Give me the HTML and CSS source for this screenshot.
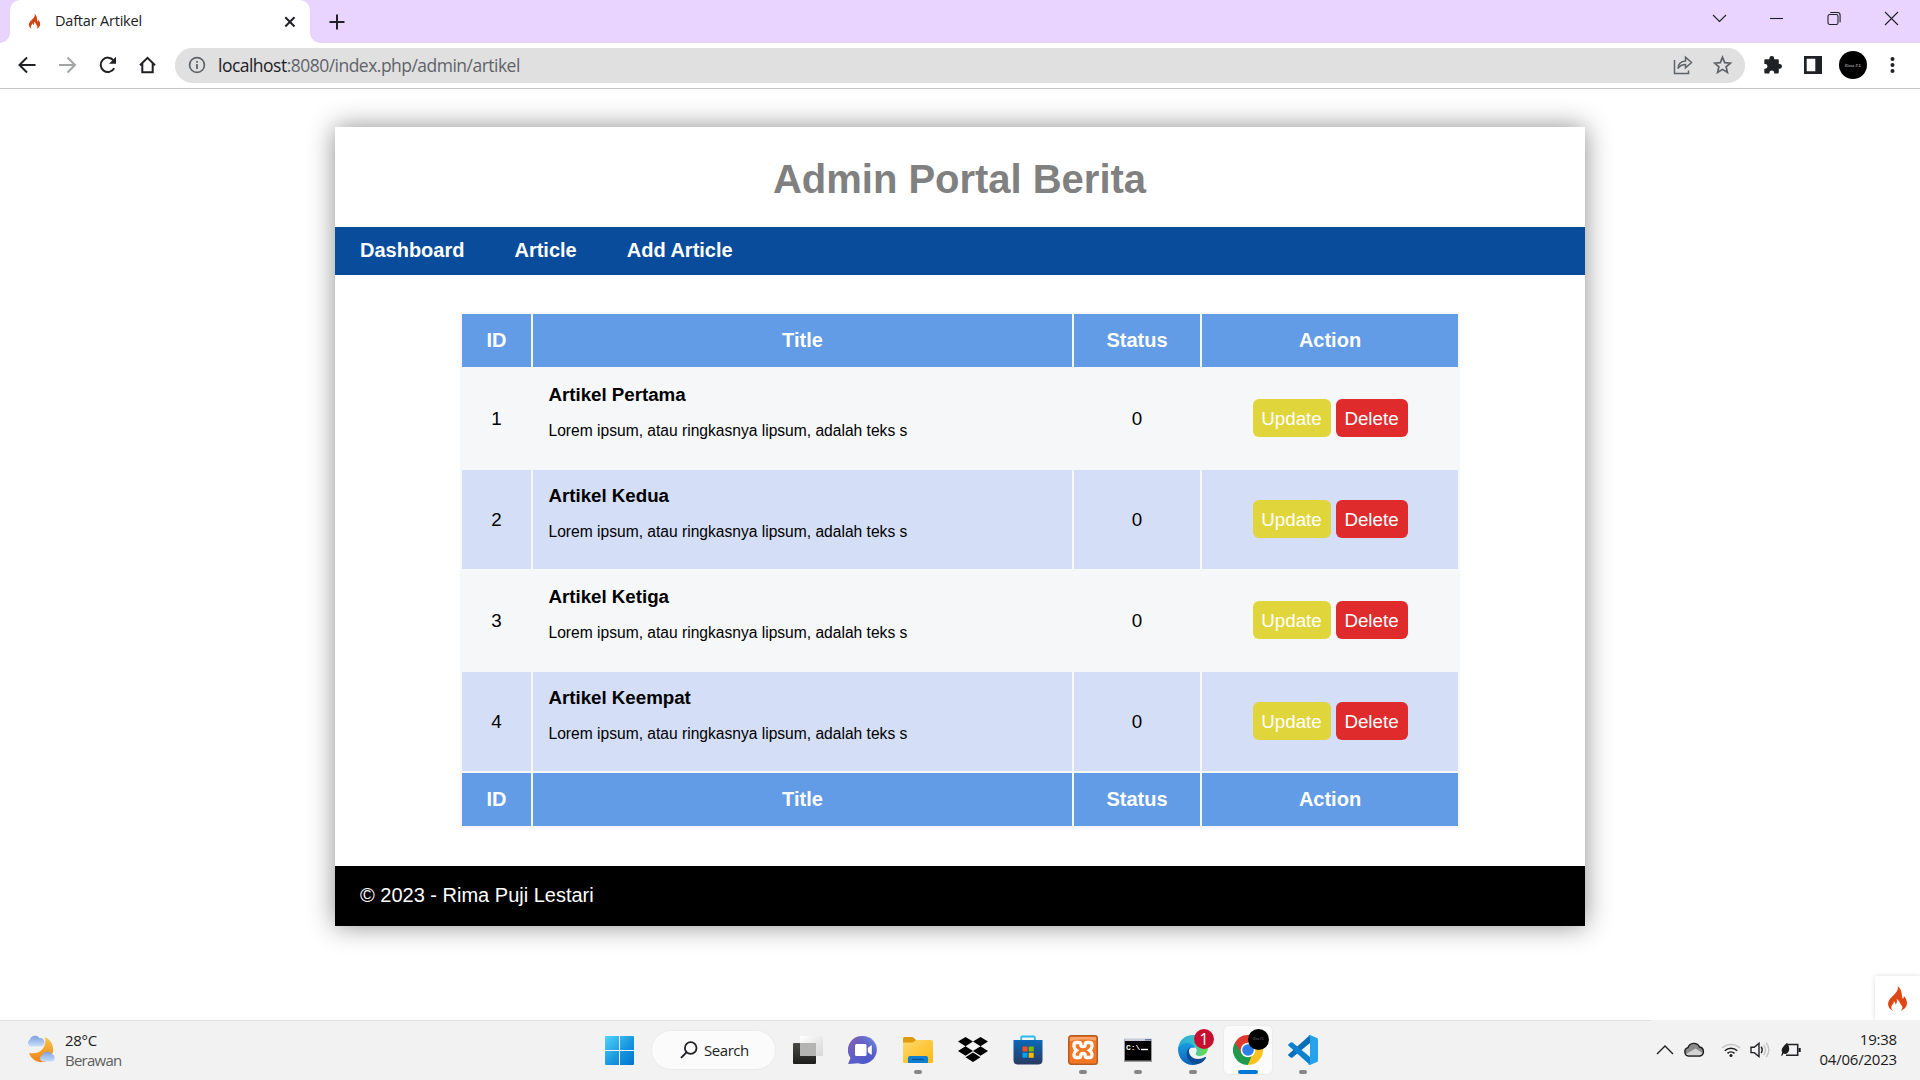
FILE: index.html
```html
<!DOCTYPE html>
<html lang="id">
<head>
<meta charset="utf-8">
<title>Daftar Artikel</title>
<link rel="stylesheet" href="styles.css">
</head>
<body>
<svg width="0" height="0" class="defs">
  <symbol id="flame" viewBox="0 0 19 25"><path d="M9.600 0c1 3.200-.6 5.400-2.800 8C4 11 .2 13.600.1 18c0 3.200 2.300 6 5 6.700-1.800-1.400-2.300-3.500-1.100-5.500.9-1.400 2-1.800 1.800-3.900 1.500.7 1.800 2.100 1.600 3.300 1.500-1.100 2-3.300 1.200-5.600 3.200 1.600 3 4.500 4.900 6.200 1.600 1.900 1 4-.8 5.500C16.500 23.600 19 20.500 19 17c0-3-1.500-5.200-3.300-7.300.3 1.500 0 2.600-1 3.100C13.400 9 14.400 3.500 9.600 0z"/></symbol>
</svg>

<header class="tabstrip">
  <div class="tab">
    <svg class="tab-icon" width="13" height="15"><use href="#flame"/></svg>
    <span class="tab-title">Daftar Artikel</span>
    <svg width="12" height="12" viewBox="0 0 12 12" class="line w2"><path d="M1.300 1.300l9.200 9.200M10.500 1.300L1.300 10.500"/></svg>
  </div>
  <svg class="new-tab line w2" width="16" height="16" viewBox="0 0 16 16"><path d="M8 .5v15M.5 8h15"/></svg>
  <div class="window-controls">
    <svg width="15" height="15" viewBox="0 0 15 15" class="line"><path d="M1 4l6.500 6.500L14 4"/></svg>
    <svg width="15" height="15" viewBox="0 0 15 15" class="line"><path d="M1 7.500h13"/></svg>
    <svg width="15" height="15" viewBox="0 0 15 15" class="line"><rect x="1" y="3.500" width="10" height="10" rx="1.800"/><path d="M3.300 1.500h7.200a2.600 2.600 0 0 1 2.600 2.600v7.200"/></svg>
    <svg width="15" height="15" viewBox="0 0 15 15" class="line"><path d="M1 1l13 13M14 1L1 14"/></svg>
  </div>
</header>

<div class="toolbar">
  <div class="nav-buttons">
    <svg width="20" height="20" viewBox="0 0 20 20" class="line w2"><path d="M18.500 10H3M10 2.500L2.500 10l7.500 7.500"/></svg>
    <svg width="20" height="20" viewBox="0 0 20 20" class="line w2 muted"><path d="M2 10H17.500M10.500 2.500l7.500 7.500-7.500 7.500"/></svg>
    <svg width="20" height="20" viewBox="0 0 20 20" class="line w2"><path d="M17.200 13.300A7.200 7.200 0 1 1 16.500 5.300"/><path d="M19 1.800v7h-7z" fill="#202124" stroke="none"/></svg>
    <svg width="20" height="20" viewBox="0 0 20 20" class="line w2"><path d="M3 10.300L10.500 2.800l7.500 7.500M5.300 8.500v8.700h10.400V8.500"/></svg>
  </div>
  <div class="omnibox">
    <svg width="18" height="18" viewBox="0 0 18 18" class="line grey"><circle cx="9" cy="9" r="7.400" stroke-width="1.700"/><path d="M9 8v5M9 5v1.700" stroke-width="1.800"/></svg>
    <span class="url"><b>localhost</b>:8080/index.php/admin/artikel</span>
    <svg width="20" height="20" viewBox="0 0 20 20" class="line grey"><path d="M1.500 5v13.500h14v-3" stroke-width="1.500"/><path d="M5 13.500c.3-4.500 3.200-7.300 7.500-7.500V2.200l6 5.300-6 5.300V9.500c-3.500 0-5.600 1-7.500 4z" stroke-width="1.500"/></svg>
    <svg width="20" height="20" viewBox="0 0 20 20" class="line grey"><path d="M9.500 2.300l2.200 5.300 5.700.5-4.300 3.700 1.300 5.600-4.900-3-4.900 3 1.300-5.600-4.300-3.700 5.700-.5z" stroke-width="1.700"/></svg>
  </div>
  <svg class="puzzle" width="20" height="20" viewBox="0 0 20 20"><path d="M1.300 5.500q0-1.300 1.300-1.300H6.400v-.9a2.400 2.400 0 0 1 4.800 0v.9h3.300q1.300 0 1.300 1.300V9h.8a2.400 2.400 0 0 1 0 4.800h-.8v3.500q0 1.300-1.300 1.300H11.200v-.8a2.400 2.400 0 0 0-4.800 0v.8H2.600q-1.300 0-1.300-1.300v-3.600h.8a2.400 2.400 0 0 0 0-4.800h-.8z" fill="#202124"/></svg>
  <svg class="panel" width="18" height="18" viewBox="0 0 18 18"><path d="M0 0h18v18H0zM2.700 2.700v12.600h8.600V2.700z" fill="#202124" fill-rule="evenodd"/></svg>
  <div class="avatar">Rima P.L</div>
  <svg class="dots" width="5" height="18" viewBox="0 0 5 18"><circle cx="2.500" cy="3" r="2"/><circle cx="2.500" cy="9" r="2"/><circle cx="2.500" cy="15" r="2"/></svg>
</div>

<main class="viewport">
  <div class="container">
    <h1 class="page-title">Admin Portal Berita</h1>
    <nav class="menu"><a>Dashboard</a><a>Article</a><a>Add Article</a></nav>
    <section class="content">
      <table class="articles">
        <colgroup><col class="c-id"><col class="c-title"><col class="c-status"><col class="c-action"></colgroup>
        <thead><tr><th>ID</th><th>Title</th><th>Status</th><th>Action</th></tr></thead>
        <tbody>
          <tr><td>1</td><td class="summary"><h3>Artikel Pertama</h3><p>Lorem ipsum, atau ringkasnya lipsum, adalah teks s</p></td><td>0</td><td><div class="actions"><a class="btn update">Update</a><a class="btn delete">Delete</a></div></td></tr>
          <tr><td>2</td><td class="summary"><h3>Artikel Kedua</h3><p>Lorem ipsum, atau ringkasnya lipsum, adalah teks s</p></td><td>0</td><td><div class="actions"><a class="btn update">Update</a><a class="btn delete">Delete</a></div></td></tr>
          <tr><td>3</td><td class="summary"><h3>Artikel Ketiga</h3><p>Lorem ipsum, atau ringkasnya lipsum, adalah teks s</p></td><td>0</td><td><div class="actions"><a class="btn update">Update</a><a class="btn delete">Delete</a></div></td></tr>
          <tr><td>4</td><td class="summary"><h3>Artikel Keempat</h3><p>Lorem ipsum, atau ringkasnya lipsum, adalah teks s</p></td><td>0</td><td><div class="actions"><a class="btn update">Update</a><a class="btn delete">Delete</a></div></td></tr>
        </tbody>
        <tfoot><tr><th>ID</th><th>Title</th><th>Status</th><th>Action</th></tr></tfoot>
      </table>
    </section>
    <footer class="site-footer">© 2023 - Rima Puji Lestari</footer>
  </div>
  <div class="debug-toggle"><svg width="19" height="25"><use href="#flame"/></svg></div>
</main>

<footer class="taskbar">
  <div class="weather">
    <svg width="32" height="30" viewBox="0 0 32 30">
      <defs>
        <linearGradient id="moon" x1="0" y1="0" x2="0" y2="1"><stop offset="0" stop-color="#f6c74a"/><stop offset="1" stop-color="#f08118"/></linearGradient>
        <linearGradient id="cloud" x1="0" y1="0" x2="0" y2="1"><stop offset="0" stop-color="#7d9fe0"/><stop offset="1" stop-color="#c8defb"/></linearGradient>
      </defs>
      <path d="M20 3c12 6 10 22-1 25-7 1-13-3-15-9 12 2 18-6 16-16z" fill="url(#moon)"/>
      <path d="M5 12.500a4 4 0 0 1 0-7A5.300 5.300 0 0 1 14.500 4a4.400 4.400 0 0 1 2 8.500z" fill="url(#cloud)"/>
      <path d="M17 27.500a3.500 3.500 0 0 1 .5-6.500 5 5 0 0 1 9-1 4 4 0 0 1 1 7.500z" fill="url(#cloud)"/>
    </svg>
    <div class="weather-text"><span>28°C</span><span class="sub">Berawan</span></div>
  </div>

  <div class="apps">
    <div class="app start"><svg width="29" height="29" viewBox="0 0 29 29">
      <defs><linearGradient id="win" x1="0" y1="0" x2="1" y2="1"><stop offset="0" stop-color="#50d3fc"/><stop offset=".55" stop-color="#1897df"/><stop offset="1" stop-color="#0173cf"/></linearGradient></defs>
      <path d="M1 0h13v14H0V1q0-1 1-1zM15 0h13q1 0 1 1v13H15zM0 15h14v14H1q-1 0-1-1zM15 15h14v13q0 1-1 1H15z" fill="url(#win)"/></svg></div>
    <div class="search">
      <svg width="18" height="18" viewBox="0 0 18 18" class="line"><circle cx="10.700" cy="7" r="5.800" stroke-width="1.800"/><path d="M6.500 11.300L1 16.800" stroke-width="1.900"/></svg>
      <span>Search</span>
    </div>
    <div class="app"><svg width="30" height="30" viewBox="0 0 30 30">
      <defs><linearGradient id="tv" x1="0" y1="0" x2="0" y2="1"><stop offset="0" stop-color="#4a4a46"/><stop offset="1" stop-color="#1d1d1b"/></linearGradient><linearGradient id="tv2" x1="0" y1="0" x2="1" y2="1"><stop offset="0" stop-color="#fff"/><stop offset="1" stop-color="#d6d6d6"/></linearGradient></defs>
      <rect x="0" y="8" width="23" height="21" rx="1" fill="url(#tv)"/><rect x="7" y="1" width="23" height="20" rx="1" fill="url(#tv2)"/><path d="M7 8h16v13H7z" fill="#b4b4b2"/></svg></div>
    <div class="app"><svg width="30" height="30" viewBox="0 0 30 30">
      <defs><linearGradient id="chat" x1="0" y1="0" x2="1" y2="1"><stop offset="0" stop-color="#8a5fae"/><stop offset=".5" stop-color="#5b5fc7"/><stop offset=".8" stop-color="#5059c9"/></linearGradient><linearGradient id="chat2" x1="0" y1="1" x2="1" y2="0"><stop offset=".5" stop-color="#5b5fc7" stop-opacity="0"/><stop offset="1" stop-color="#7ba5f5"/></linearGradient></defs>
      <path d="M15 1a14 14 0 1 1-5 27.200L1 29c-.8 0-.8-.7-.5-1.300l2-4.700A14 14 0 0 1 15 1z" fill="url(#chat)"/><circle cx="15" cy="15" r="14" fill="url(#chat2)"/>
      <rect x="7" y="9" width="11.500" height="12" rx="1.500" fill="#fff"/><path d="M19.800 13l3-2.500q1-.5 1 .7v7.600q0 1.200-1 .7l-3-2.500z" fill="#fff"/></svg></div>
    <div class="app open"><svg width="30" height="30" viewBox="0 0 30 30">
      <defs><linearGradient id="fold" x1="0" y1="0" x2="1" y2="1"><stop offset="0" stop-color="#ffd96b"/><stop offset="1" stop-color="#fdb813"/></linearGradient></defs>
      <path d="M0 3.500Q0 2 1.500 2H9q1.500 0 2.500 1.500L13 5v5H0z" fill="#dd9d0b"/><path d="M0 7.500h9q1.500 0 2.500-1.200L13 5h15.500q1.500 0 1.500 1.500v20q0 1.500-1.500 1.500h-27Q0 28 0 26.500z" fill="url(#fold)"/>
      <path d="M5 28v-5q0-2 2-2h16q2 0 2 2v5z" fill="#0f7fd1"/><path d="M9 24.500h12" stroke="#0a4f8f" stroke-width="1.200"/></svg></div>
    <div class="app"><svg width="30" height="30" viewBox="0 0 30 30"><path d="M7.500 2L15 6.600l-7.500 4.700L0 6.600zM22.500 2L30 6.600l-7.500 4.700L15 6.600zM0 16l7.500-4.700L15 16l-7.500 4.700zM22.500 11.300L30 16l-7.500 4.700L15 16zM7.500 22.200L15 17.600l7.500 4.600L15 27z" fill="#000"/></svg></div>
    <div class="app"><svg width="30" height="30" viewBox="0 0 30 30">
      <defs><linearGradient id="store" x1="0" y1="0" x2="0" y2="1"><stop offset="0" stop-color="#0a68ba"/><stop offset="1" stop-color="#2a3a62"/></linearGradient></defs>
      <path d="M8.200 7V2.500q0-1 1-1h11.600q1 0 1 1V7" fill="none" stroke="#29b9f0" stroke-width="1.800"/><path d="M.5 5h29v20q0 4.500-4.500 4.500H5Q.5 29.500.5 25z" fill="url(#store)"/>
      <path d="M9.500 11.500h5v5h-5z" fill="#f25022"/><path d="M15.700 11.500h5v5h-5z" fill="#7fba00"/><path d="M9.500 17.700h5v5h-5z" fill="#00a4ef"/><path d="M15.700 17.700h5v5h-5z" fill="#ffb900"/></svg></div>
    <div class="app open"><svg width="30" height="30" viewBox="0 0 30 30">
      <rect x=".7" y=".7" width="28.600" height="28.600" rx="2.500" fill="#f37623" stroke="#b55a20" stroke-width="1.400"/><path d="M2 2h26v3.500Q15 3.500 2 6z" fill="#f8a46c"/>
      <path d="M8.500 7.500H11q1.800 0 1.800 2 0 2.200 2.200 2.200t2.200-2.200q0-2 1.800-2h2.500q2.500 0 2.500 2.500v1.500q0 2-2.500 3.800 2.500 1.700 2.500 3.700v1q0 2.500-2.500 2.500H19q-1.800 0-1.800-2 0-2.200-2.200-2.200t-2.200 2.200q0 2-1.800 2H8.500Q6 22.500 6 20v-1q0-2 2.500-3.700Q6 13.500 6 11.500V10q0-2.500 2.500-2.500z" fill="none" stroke="#fff" stroke-width="3.300"/></svg></div>
    <div class="app open"><svg width="30" height="30" viewBox="0 0 30 30"><rect x="1" y="4" width="28" height="23" fill="#9b9b9b"/><path d="M1.500 3.500h27v2.500h-27z" fill="#c9ccd8"/><path d="M2 6h26v19.500H2z" fill="#000"/><path d="M22 4h6v1.500h-6z" fill="#6b79a8"/><text x="3" y="15" class="prompt">C:\</text><path d="M18 14.500h7" stroke="#fff" stroke-width="1.400"/></svg></div>
    <div class="app open"><svg width="30" height="30" viewBox="0 0 30 30">
      <defs><linearGradient id="edge1" x1="0" y1="0" x2="1" y2=".2"><stop offset="0" stop-color="#2aa5dc"/><stop offset=".6" stop-color="#36c3c8"/><stop offset="1" stop-color="#63d957"/></linearGradient><linearGradient id="edge2" x1="0" y1="0" x2="0" y2="1"><stop offset="0" stop-color="#1b9de2"/><stop offset="1" stop-color="#0c62b8"/></linearGradient></defs>
      <path d="M0 14C1 5 7 0 15 0c9 0 15 6 15 13 0 5-4 8-8 8-3 0-5-1-4-3 2-3 0-7-5-7C7 10 2 11 0 14z" fill="url(#edge1)"/>
      <path d="M0 14c1-4 5-6 9-6s7 2 8 5c-4-1-7 1-7 5 0 6 5 11 11 10-2 1.500-4 2-6 2C6 30 0 23 0 14z" fill="url(#edge2)"/>
      <path d="M12 12c-3 6 1 12 8 12 3 0 5-1 7-2 1 0 1.300.5 1 1-3 5-8 7-11 6-7-1-12-11-5-17z" fill="#0d4d94"/></svg><span class="badge">1</span></div>
    <div class="app open active"><svg width="30" height="30" viewBox="0 0 30 30">
      <path d="M15 15L2 7.500A15 15 0 0 0 15 30l6.500-11z" fill="#1f9a4c"/><path d="M15 15h6L15 30A15 15 0 0 0 28 7.500H15z" fill="#fcc31e"/><path d="M15 7.500h13A15 15 0 0 0 2 7.500l6.500 11.200z" fill="#e03a2e"/>
      <circle cx="15" cy="15" r="7.300" fill="#fff"/><circle cx="15" cy="15" r="5.800" fill="#2f7de9"/></svg><span class="profile">Rima P.L</span></div>
    <div class="app open"><svg width="30" height="30" viewBox="0 0 30 30"><path d="M22 0v8L4.500 22.500q-1 .6-1.800 0L.5 20.700q-.8-.8 0-1.500z" fill="#0a6fb8"/><path d="M22 30v-8L4.500 7.500q-1-.6-1.800 0L.5 9.300q-.8.800 0 1.500z" fill="#0b82cf"/><path d="M22 0l7 3q1 .5 1 1.700v20.600q0 1.200-1 1.700l-7 3q-1.500 0-2-1 2 .5 2-1.500v-25q0-2-2-1.500 1-1 2-1z" fill="#27a3ee"/></svg></div>
  </div>

  <div class="tray">
    <svg class="expand line" width="18" height="18" viewBox="0 0 18 18"><path d="M1 13l8-8 8 8" stroke-width="1.400"/></svg>
    <svg class="cloud" width="22" height="18" viewBox="0 0 22 18"><path d="M5.500 15a4.300 4.300 0 0 1-.5-8.400 6.200 6.200 0 0 1 11.500-.6 4.600 4.600 0 0 1 .5 9z" fill="#8b8b8b" stroke="#1b1b1b" stroke-width="1.400"/><path d="M3 13L12.500 7.500l7 4.500q-.5 2-3 2.300H5.500Q4 14.300 3 13z" fill="#d2d2d2"/></svg>
    <svg class="wifi" width="20" height="18" viewBox="0 0 20 18"><path d="M1 7a13 13 0 0 1 18 0" stroke="#c4c4c4"/><path d="M3.800 9.700a9 9 0 0 1 12.400 0M6.500 12.400a5 5 0 0 1 7 0"/><circle cx="10" cy="14.500" r="1.500" class="solid"/></svg>
    <svg width="20" height="18" viewBox="0 0 20 18" class="line"><path d="M1 6.200h3.200L9 2.300v13.200l-4.800-3.900H1z" stroke-width="1.400"/><path d="M11.200 5.700q2 3.200 0 6.400" stroke-width="1.400"/><path d="M13.700 3.700q3.500 5.200 0 10.400M16.300 1.700q5 7.200 0 14.400" stroke="#c4c4c4" stroke-width="1.400"/></svg>
    <svg width="21" height="18" viewBox="0 0 21 18" class="line"><path d="M7.500 3.500h10.200v10.700H6" stroke-width="1.500"/><path d="M18.500 7h2.200v4h-2.200z" class="solid"/><path d="M7 1.700C9.500 5.500 10.300 9 7.500 12q-2 1.500-4 .5L2 15l-.8-.5 1-3C.3 7.500 4 5 7 1.700z" class="solid"/></svg>
    <div class="clock"><span>19:38</span><span>04/06/2023</span></div>
  </div>
</footer>
</body>
</html>
```
FILE: styles.css
```css
* { box-sizing: border-box; }
body {
  margin: 0;
  width: 1920px;
  height: 1080px;
  overflow: hidden;
  display: flex;
  flex-direction: column;
  background: #fff;
  font-family: "Liberation Sans", Arial, sans-serif;
}
svg { display: block; flex: none; }
.defs { position: absolute; }
.line { fill: none; stroke: #202124; stroke-width: 1.1; }
.line.w2 { stroke-width: 2; }
.line.muted { stroke: #a3a4a5; }
.line.grey { stroke: #5f6368; }
.solid { fill: #1b1b1b; stroke: none; }

/* tab strip */
.tabstrip {
  display: flex;
  align-items: center;
  height: 43px;
  padding: 0 14px 0 10px;
  background: #e8d4ff;
}
.tab {
  position: relative;
  display: flex;
  align-items: center;
  align-self: stretch;
  width: 300px;
  padding: 0 14px 0 18px;
  border-radius: 10px 10px 0 0;
  background: #fff;
}
.tab::before, .tab::after {
  content: "";
  position: absolute;
  bottom: 0;
  width: 10px;
  height: 10px;
}
.tab::before { left: -10px; background: radial-gradient(circle at 0 0, transparent 9.5px, #fff 10px); }
.tab::after { right: -10px; background: radial-gradient(circle at 100% 0, transparent 9.5px, #fff 10px); }
.tab-icon { fill: #d1430f; }
.tab-title {
  flex: 1;
  padding: 0 0 2px 14px;
  font: 14.5px "Open Sans", "Noto Sans", sans-serif;
  letter-spacing: -0.2px;
  color: #202124;
}
.new-tab { margin-left: 19px; }
.window-controls { display: flex; gap: 42.5px; margin-left: auto; padding: 0 7px 6px 0; }

/* address bar */
.toolbar {
  display: flex;
  align-items: center;
  height: 46px;
  padding: 0 25px 1px 17px;
  border-bottom: 1px solid #c9c9c9;
  background: #fff;
}
.nav-buttons { display: flex; gap: 20px; width: 158px; }
.omnibox {
  display: flex;
  align-items: center;
  width: 1570px;
  height: 35px;
  padding: 0 12px 0 13px;
  border-radius: 18px;
  background: #e0e0e0;
}
.omnibox svg:last-child { margin-left: 20px; }
.url {
  flex: 1;
  padding: 0 0 1px 12px;
  font: 17.5px "Open Sans", "Noto Sans", sans-serif;
  letter-spacing: -0.52px;
  color: #5f6368;
}
.url b { font-weight: 400; color: #202124; }
.puzzle { margin-left: 18px; }
.panel { margin-left: 20.5px; }
.avatar {
  display: flex;
  align-items: center;
  justify-content: center;
  width: 28px;
  height: 28px;
  margin-left: 17.5px;
  border-radius: 50%;
  background: #000;
  color: #ccc;
  font: italic 4.5px "Liberation Serif", serif;
}
.dots { margin-left: 23px; fill: #202124; }

/* page */
.viewport { position: relative; height: 931px; padding-top: 38px; overflow: hidden; }
.container {
  width: 1250px;
  margin: 0 auto;
  background: #fff;
  box-shadow: 0 0 25px #8e8e8e;
}
.page-title {
  margin: 0;
  height: 100px;
  padding: 2px 1px 0 0;
  line-height: 100px;
  font-size: 40px;
  text-align: center;
  letter-spacing: -0.02px;
  color: gray;
}
.menu {
  display: flex;
  gap: 50px;
  height: 48px;
  padding: 0 25px;
  background: #084c9b;
  color: #fff;
  font-size: 20px;
  font-weight: 700;
  line-height: 47px;
}
.content { padding: 37px 125px 38px; }
.articles {
  width: 1000px;
  table-layout: fixed;
  border-spacing: 2px;
  background: #f5f7f9;
  font-size: 18.75px;
}
.c-id { width: 69px; }
.c-title { width: 539px; }
.c-status { width: 126px; }
.c-action { width: 256px; }
.articles th {
  height: 53px;
  padding: 0;
  background: #629be6;
  color: #fff;
  font-size: 20px;
}
.articles td { height: 99px; padding: 0; text-align: center; vertical-align: middle; }
.articles tbody tr:nth-child(even) td { background: #d4def7; }
.articles .summary { padding: 15px 16px 0 15.5px; text-align: left; vertical-align: top; }
.summary h3 { margin: 0; font-size: 18.75px; line-height: 22px; letter-spacing: -0.03px; }
.summary p { margin: 15px 0 0; font-size: 15.6px; line-height: 20px; }
.actions { display: flex; justify-content: center; gap: 5px; padding-bottom: 2px; }
.btn {
  height: 38px;
  border-radius: 6px;
  color: #fff;
  line-height: 40px;
  text-align: center;
}
.update { width: 78px; background: #e1d53c; }
.delete { width: 72px; background: #df2b2b; }
.site-footer {
  height: 60px;
  padding-left: 25px;
  background: #000;
  color: #fff;
  font-size: 20px;
  line-height: 58px;
}
.debug-toggle {
  position: absolute;
  right: 0;
  bottom: 0;
  display: flex;
  align-items: center;
  width: 45px;
  height: 44px;
  padding: 1px 0 0 13px;
  background: #fff;
  box-shadow: 0 0 5px #ddd;
  fill: #dd4814;
}

/* taskbar */
.taskbar {
  display: flex;
  height: 60px;
  background: linear-gradient(#e0e0e0, #e0e0e0) 0 0 / 1650px 1px no-repeat #f2f2f2;
  font: 15px "Open Sans", "Noto Sans", sans-serif;
  color: #1b1b1b;
}
.weather { display: flex; width: 591.5px; padding: 14px 0 0 25px; gap: 8px; }
.weather-text, .clock { display: flex; flex-direction: column; line-height: 20px; }
.weather-text { margin-top: -4px; letter-spacing: -0.3px; }
.sub { color: #5d5d5d; letter-spacing: -0.75px; }
.apps { display: flex; }
.app {
  position: relative;
  display: flex;
  align-items: center;
  justify-content: center;
  width: 55px;
  height: 60px;
  isolation: isolate;
}
.search {
  display: flex;
  align-items: center;
  gap: 6px;
  width: 123px;
  height: 38px;
  margin: 11px 5.5px 0;
  padding: 0 0 0 28px;
  border-radius: 19px;
  background: #fbfbfb;
  box-shadow: 0 0 1px 1px #ececec;
  letter-spacing: -0.45px;
}
.start svg { margin-top: 1px; }
.open::after {
  content: "";
  position: absolute;
  left: calc(50% - 4px);
  bottom: 6px;
  width: 8px;
  height: 4px;
  border-radius: 2px;
  background: #868686;
}
.active::before {
  content: "";
  position: absolute;
  z-index: -1;
  left: 3.5px;
  top: 6px;
  width: 48px;
  height: 48px;
  border-radius: 5px;
  background: #fbfbfb;
  box-shadow: 0 0 1px 1px #ececec;
}
.active::after { left: calc(50% - 10px); width: 20px; background: #0078d7; }
.badge, .profile {
  position: absolute;
  left: 28.5px;
  top: 8.5px;
  width: 20px;
  height: 20px;
  border-radius: 50%;
  background: #c8102e;
  color: #fff;
  font-size: 16px;
  line-height: 20px;
  text-align: center;
}
.profile {
  left: 27.5px;
  width: 21px;
  height: 21px;
  background: #000;
  color: #777;
  font: italic 3px/21px "Liberation Serif", serif;
}
.prompt { font: 700 8px "Liberation Mono", monospace; fill: #fff; }
.tray { display: flex; align-items: center; margin-left: auto; padding-right: 23px; }
.tray svg { margin-right: 10px; }
.tray .expand { margin-right: 9px; }
.tray .cloud { margin-right: 11px; }
.tray .wifi { margin: 0 9px 0 5px; fill: none; stroke: #1b1b1b; stroke-width: 1.5; }
.clock { width: 86px; margin: -2px 0 0; text-align: right; white-space: nowrap; letter-spacing: -0.2px; }
```
